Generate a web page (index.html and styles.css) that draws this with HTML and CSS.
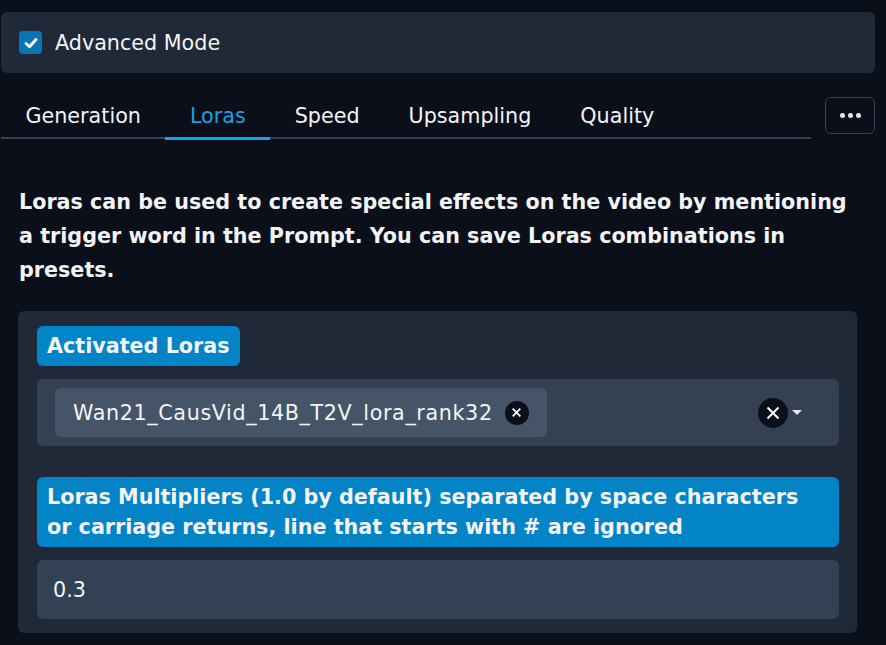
FILE: index.html
```html
<!DOCTYPE html>
<html lang="en">
  <head>
    <title>Loras</title>
    <meta charset="utf-8" />
    <link rel="stylesheet" href="styles.css">
  </head>

  <body class="app">
    <div class="mode-box">
      <label class="check-row">
        <span class="check">
          <svg width="16" height="16" viewBox="0 0 16 16">
            <path d="M3 8.5 L6.5 11.8 L13 4.5" fill="none" stroke="#fff" stroke-width="2.8" stroke-linecap="round" stroke-linejoin="round" />
          </svg>
        </span>
        Advanced Mode
      </label>
    </div>

    <div class="tab-bar">
      <div class="tab-list">
        <div class="tab">Generation</div>
        <div class="tab active">Loras</div>
        <div class="tab">Speed</div>
        <div class="tab">Upsampling</div>
        <div class="tab">Quality</div>
      </div>
      <button type="button" class="more-btn">
        <span class="dot"></span><span class="dot"></span><span class="dot"></span>
      </button>
    </div>

    <p class="intro">
      Loras can be used to create special effects on the video by mentioning
      a trigger word in the Prompt. You can save Loras combinations in
      presets.
    </p>

    <div class="panel">
      <div class="label">Activated Loras</div>
      <div class="dropdown">
        <div class="token">
          Wan21_CausVid_14B_T2V_lora_rank32
          <span class="token-x">
            <svg width="11" height="11" viewBox="0 0 10 10">
              <path d="M1.5 1.5 L8.5 8.5 M8.5 1.5 L1.5 8.5" stroke="#fff" stroke-width="1.6" />
            </svg>
          </span>
        </div>
        <div class="dd-icons">
          <span class="clear-x">
            <svg width="14" height="14" viewBox="0 0 14 14">
              <path d="M1.5 1.5 L12.5 12.5 M12.5 1.5 L1.5 12.5" stroke="#fff" stroke-width="2" />
            </svg>
          </span>
          <span class="caret"></span>
        </div>
      </div>

      <div class="label label-wide">
        Loras Multipliers (1.0 by default) separated by space characters
        or carriage returns, line that starts with # are ignored
      </div>
      <div class="text-input">0.3</div>
    </div>
  </body>
</html>
```

FILE: styles.css
```css
.app {
  margin: 0;
  padding: 12px 11px 0 1px;
  background: #0b0f19;
  color: #f3f4f6;
  font-family: "DejaVu Sans", Verdana, sans-serif;
  font-size: 20.7px;
}

.mode-box {
  height: 61px;
  display: flex;
  align-items: center;
  padding-left: 18px;
  background: #1f2937;
  border-radius: 6px;
}

.check-row {
  display: flex;
  align-items: center;
  gap: 13px;
}

.check {
  width: 23px;
  height: 23px;
  display: flex;
  align-items: center;
  justify-content: center;
  background: #0a75b3;
  border-radius: 4px;
}

.tab-bar {
  display: flex;
  align-items: flex-end;
  margin-top: 24px;
}

.tab-list {
  display: flex;
  width: 811px;
  border-bottom: 2px solid #374151;
}

.tab {
  padding: 0 24.5px 5px;
  margin-bottom: -3px;
  border-bottom: 3px solid transparent;
  line-height: 32px;
}

.tab.active {
  color: #1ba1e2;
  border-bottom-color: #0ea5e9;
}

.more-btn {
  width: 50px;
  height: 37px;
  margin: 0 0 5px 14px;
  display: flex;
  align-items: center;
  justify-content: center;
  gap: 3px;
  background: transparent;
  border: 1px solid #374151;
  border-radius: 6px;
  padding: 0;
}

.dot {
  width: 5px;
  height: 5px;
  border-radius: 50%;
  background: #e5e7eb;
}

.intro {
  margin: 46px 0 0 18px;
  width: 840px;
  font-weight: bold;
  line-height: 34px;
}

.panel {
  width: 802px;
  margin: 24px 0 0 17px;
  padding: 15px 18px 14px 19px;
  background: #1f2937;
  border-radius: 6px;
}

.label {
  display: inline-block;
  padding: 0 10px;
  line-height: 40px;
  background: #0384c7;
  border-radius: 6px;
  font-weight: bold;
}

.label-wide {
  display: block;
  margin-top: 31px;
  padding: 5px 10px;
  line-height: 30px;
}

.dropdown {
  height: 67px;
  margin-top: 13px;
  display: flex;
  align-items: center;
  justify-content: space-between;
  padding: 0 37px 0 18px;
  background: #354152;
  border-radius: 6px;
}

.token {
  height: 49px;
  display: flex;
  align-items: center;
  gap: 12px;
  padding: 0 18px;
  background: #465467;
  border-radius: 6px;
  letter-spacing: 0.62px;
}

.token-x {
  width: 24px;
  height: 24px;
  display: flex;
  align-items: center;
  justify-content: center;
  background: #0b0f19;
  border-radius: 50%;
}

.dd-icons {
  display: flex;
  align-items: center;
  gap: 4px;
}

.clear-x {
  width: 30px;
  height: 30px;
  display: flex;
  align-items: center;
  justify-content: center;
  background: #0b0f19;
  border-radius: 50%;
}

.caret {
  width: 0;
  height: 0;
  border-left: 5px solid transparent;
  border-right: 5px solid transparent;
  border-top: 5px solid #e5e7eb;
}

.text-input {
  height: 59px;
  margin-top: 13px;
  display: flex;
  align-items: center;
  padding-left: 16px;
  background: #334155;
  border-radius: 6px;
}
```
